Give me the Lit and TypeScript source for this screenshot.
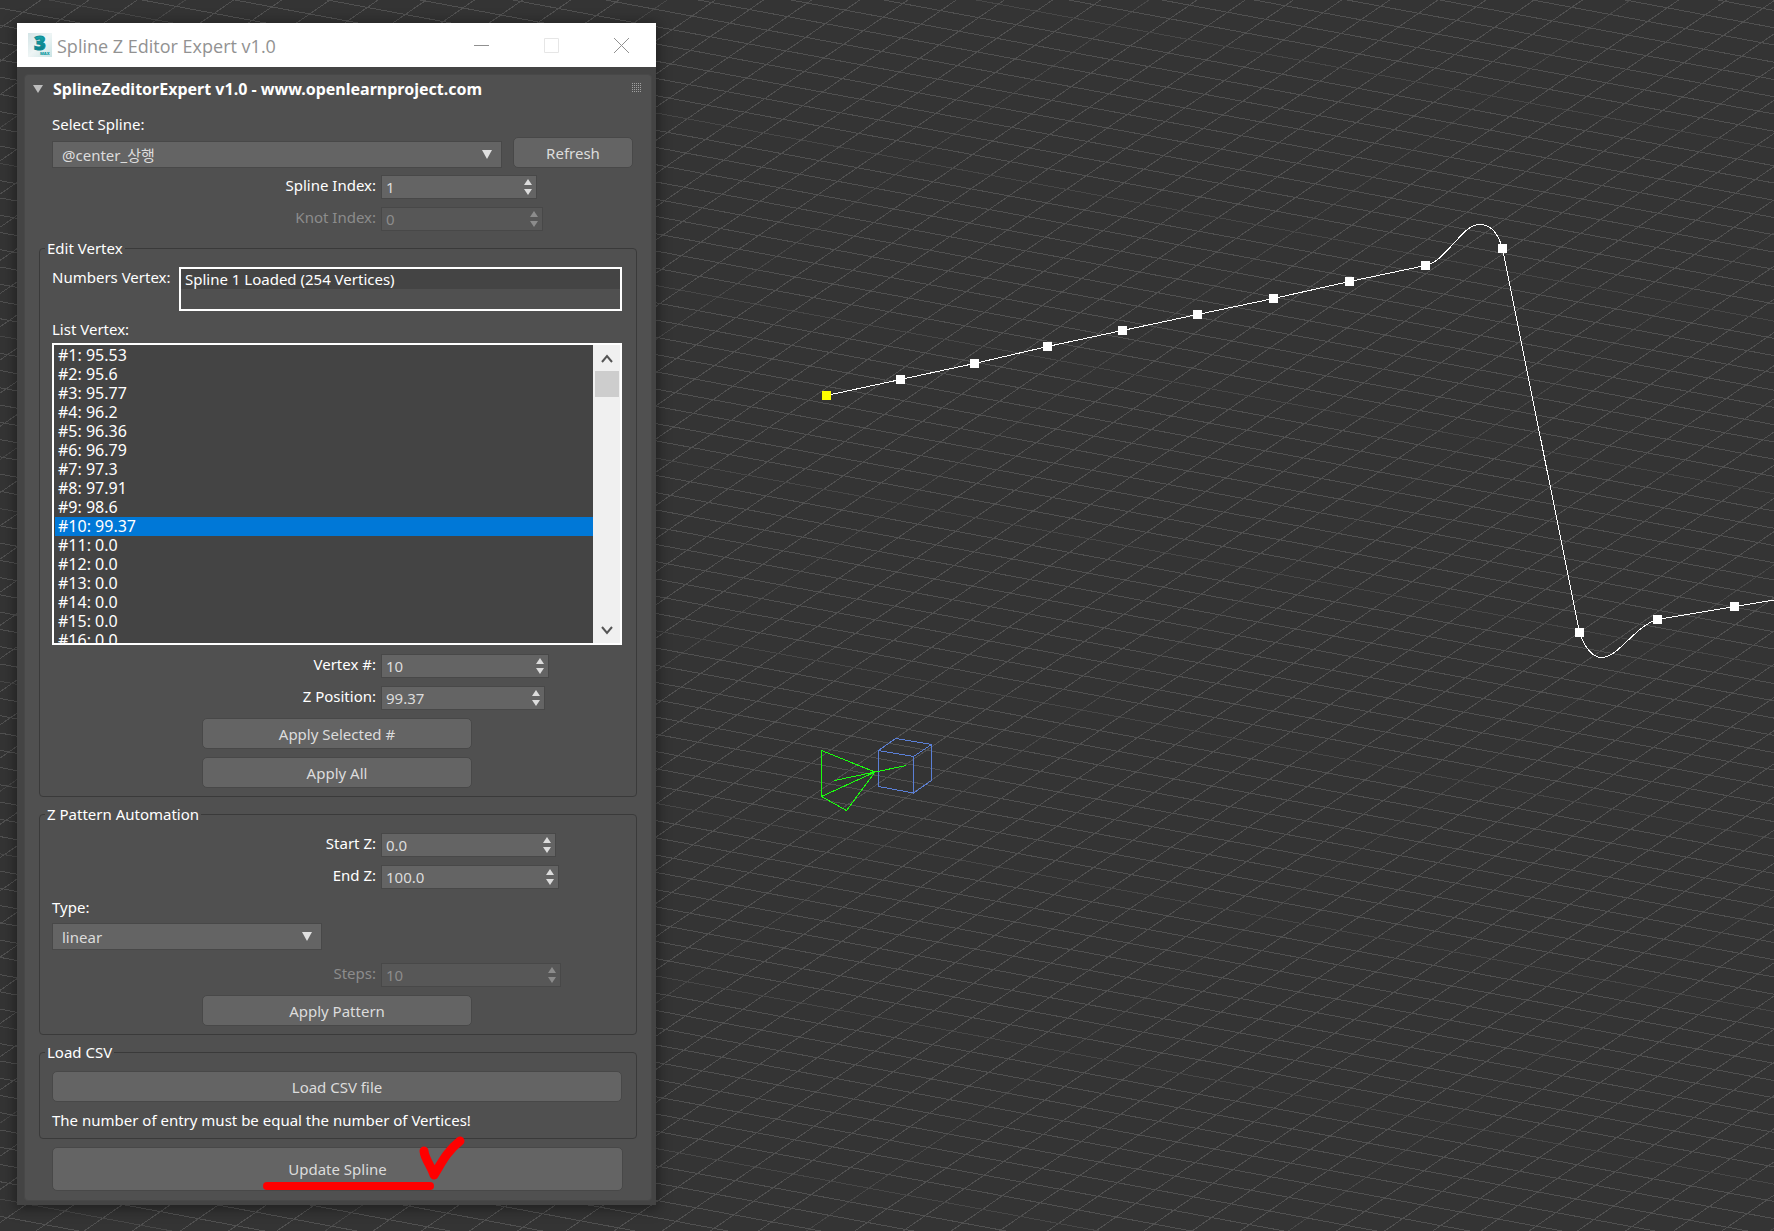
import { LitElement, html, svg, css } from "lit";
import { customElement, property, state } from "lit/decorators.js";
import { classMap } from "lit/directives/class-map.js";

const control = css`
  * {
    box-sizing: border-box;
  }
  button,
  input,
  select {
    margin: 0;
    font: inherit;
    color: inherit;
  }
`;

/** Home grid, spline, camera and box gizmos of the perspective viewport. */
@customElement("scene-viewport")
export class SceneViewport extends LitElement {
  static styles = css`
    :host {
      display: block;
      background: #343434;
      overflow: hidden;
    }
    .scene {
      display: block;
      width: 100%;
      height: 100%;
      fill: none;
      shape-rendering: crispEdges;
    }
    .grid {
      stroke: #505050;
    }
    .grid-major {
      stroke: #474747;
    }
    .spline {
      stroke: #fff;
    }
    .knot {
      fill: #fff;
    }
    .first {
      fill: #ff0;
    }
    .camera {
      stroke: #1aff0d;
    }
    .cube {
      stroke: #5a7fd6;
    }
  `;

  private readonly knots: [number, number][] = [
    [826, 395], [900, 379], [974, 363], [1047, 346], [1122, 330],
    [1197, 314], [1273, 298], [1349, 281], [1425, 265], [1502, 248],
    [1579, 632], [1657, 619], [1734, 606],
  ];

  private gridLines() {
    const span = 4000;
    const lines = [];
    for (let k = -30; k < 160; k++) {
      const c = 715.3 + 48.17 * k;
      const major = (((k - 9) % 10) + 10) % 10 === 0;
      lines.push(svg`<line class=${major ? "grid-major" : "grid"}
        x1=${c} y1="0" x2=${c - span / 0.68875} y2=${span} />`);
    }
    for (let k = -60; k < 230; k++) {
      const y = -9.2 + 17.26 * k;
      lines.push(svg`<line class=${k % 10 === 0 ? "grid-major" : "grid"}
        x1="0" y1=${y} x2=${span} y2=${y + span * 0.1862} />`);
    }
    return lines;
  }

  render() {
    return html`
      <svg class="scene" aria-hidden="true">
        ${this.gridLines()}
        <g class="cube">
          <path d="M878.5 750.5 895.5 738.5 931.5 744.5 913.5 756.5ZM878.5 750.5V786.5L913.5 793V756.5M913.5 793 931.5 780.5V744.5" />
        </g>
        <g class="camera">
          <path d="M875 772 821.5 750.5V796.5L846.5 810.5ZM875 772 821.5 796.5M834.5 780.5 875 772 906.5 765.5" />
        </g>
        <path
          class="spline"
          d="M826.5 395.5 900.5 379.5 974.5 363.5 1047.5 346.5 1122.5 330.5 1197.5 314.5 1273.5 298.5 1349.5 281.5 1425.5 265.5C1438 263 1446 251 1456 241C1464 232 1471 224.500 1480 224.500C1491 224.500 1498 233 1502.500 248.500L1579.500 632.500C1585 648 1592 657.500 1602 657.500C1618 657.500 1635 626 1657.500 619.500L1734.500 606.500 1774 600 2000 562"
        />
        ${this.knots.map(
          ([x, y], i) =>
            svg`<rect class=${i === 0 ? "first" : "knot"} x=${x - 4} y=${y - 4} width="9" height="9" />`
        )}
      </svg>
    `;
  }
}

/** Right-aligned label with a numeric field and up/down arrows. */
@customElement("spin-field")
export class SpinField extends LitElement {
  static styles = [
    control,
    css`
      :host {
        display: flex;
        align-items: flex-start;
        gap: 5px;
        color: #fff;
      }
      .label {
        flex: 0 0 324px;
        text-align: right;
        line-height: 20px;
      }
      .box {
        display: flex;
        align-items: center;
        height: 24px;
        padding-right: 4px;
        color: #dcdcdc;
        background: #646464;
        border: 1px solid #484848;
      }
      .value {
        flex: 1;
        min-width: 0;
        height: 20px;
        padding: 0 4px;
        border: 0;
        outline: 0;
        background: none;
      }
      .arrows {
        display: flex;
        flex-direction: column;
        gap: 2px;
      }
      .arrow {
        display: block;
        padding: 0;
        border: 0;
        background: none;
        height: 8px;
      }
      .glyph {
        display: block;
        fill: currentColor;
      }
      .off .label,
      .off .box {
        color: #8c8c8c;
      }
      .off .box {
        background: #575757;
      }
      .row {
        display: contents;
      }
    `,
  ];

  @property() label = "";
  @property() value = "";
  @property({ type: Number }) size = 160;
  @property({ type: Boolean }) disabled = false;

  render() {
    return html`
      <div class=${classMap({ row: true, off: this.disabled })}>
        <label class="label" for="value">${this.label}</label>
        <div class="box" style="width:${this.size}px">
          <input id="value" class="value" inputmode="decimal" .value=${this.value} ?disabled=${this.disabled} />
          <div class="arrows">
            <button class="arrow" aria-label="Increase" ?disabled=${this.disabled}>
              <svg class="glyph" width="8" height="8"><path d="M4 1 8 7H0Z" /></svg>
            </button>
            <button class="arrow" aria-label="Decrease" ?disabled=${this.disabled}>
              <svg class="glyph" width="8" height="8"><path d="M0 1H8L4 7Z" /></svg>
            </button>
          </div>
        </div>
      </div>
    `;
  }
}

@customElement("app-root")
export class AppRoot extends LitElement {
  static styles = [
    control,
    css`
      :host {
        display: block;
        position: relative;
        min-height: 100vh;
        padding: 23px 17px 26px;
        font: 15px/20px "Noto Sans", "Noto Sans CJK KR", sans-serif;
        color: #fff;
      }
      .viewport {
        position: absolute;
        inset: 0;
      }
      .window {
        position: relative;
        max-width: 639px;
        background: #444;
        box-shadow: 0 2px 12px 2px rgba(0, 0, 0, 0.4);
      }
      .titlebar {
        display: flex;
        align-items: center;
        height: 44px;
        padding-left: 11px;
        background: #fff;
        color: #929292;
      }
      .logo {
        overflow: visible;
      }
      .title {
        flex: 1;
        margin: 0;
        padding: 2px 0 0 5px;
        font: 18px/24px "Open Sans", sans-serif;
      }
      .caption {
        display: grid;
        place-items: center;
        width: 70px;
        height: 44px;
        padding: 0;
        border: 0;
        background: none;
        color: #909090;
      }
      .caption:disabled {
        color: #e6e6e6;
      }
      .line {
        fill: none;
        stroke: currentColor;
      }
      .body {
        padding: 7px 4px 4px 7px;
      }
      .panel {
        padding: 0 14px 9px;
        background: #505050;
        border: 1px solid #484848;
        border-radius: 4px;
      }
      .rollout {
        display: flex;
        align-items: center;
        gap: 10px;
        height: 28px;
        margin-left: -6px;
        margin-right: -5px;
      }
      .heading {
        flex: 1;
        margin: 0;
        font-size: 16px;
        line-height: 20px;
      }
      .stack {
        display: flex;
        flex-direction: column;
        gap: 8px;
        padding: 0 14px 0 13px;
      }
      .source {
        padding-top: 11px;
      }
      .picker {
        display: flex;
        align-items: flex-end;
        gap: 11px;
        margin: -5px -10px -1px 0;
      }
      .picker .combo {
        flex: 1;
      }
      .combo {
        position: relative;
      }
      .select {
        display: block;
        width: 100%;
        height: 27px;
        padding: 0 24px 0 9px;
        appearance: none;
        color: #dcdcdc;
        background: #646464;
        border: 1px solid #484848;
        border-radius: 0;
      }
      .drop {
        position: absolute;
        right: 10px;
        top: 9px;
        fill: #e0e0e0;
        pointer-events: none;
      }
      .button {
        height: 31px;
        padding: 0 8px;
        color: #dcdcdc;
        background: #646464;
        border: 1px solid #484848;
        border-radius: 5px;
      }
      .refresh {
        width: 120px;
      }
      .medium {
        width: 270px;
        align-self: center;
      }
      .large {
        height: 44px;
      }
      .group {
        min-width: 0;
        margin: 7px 0 0;
        padding: 0 0 8px;
        border: 1px solid #3a3a3a;
        border-radius: 4px;
      }
      .legend {
        margin-left: 5px;
        padding: 0 2px;
      }
      .group .stack {
        padding-top: 9px;
        padding-left: 12px;
      }
      .status {
        display: flex;
        align-items: flex-start;
      }
      .status-label {
        flex: 0 0 127px;
      }
      .status-box {
        flex: 1;
        height: 44px;
        border: 2px solid #fff;
        outline: 0;
      }
      .status-text {
        display: block;
        padding: 0 4px;
        height: 20px;
        line-height: 20px;
        background: #444;
      }
      .list {
        display: flex;
        height: 302px;
        margin: -4px 0 1px;
        border: 2px solid #fff;
        background: #444;
        font-size: 16px;
      }
      .items {
        flex: 1;
        margin: 0;
        padding: 1px 0 0 1px;
        list-style: none;
        overflow: hidden;
      }
      .item {
        height: 19px;
        padding-left: 3px;
        line-height: 19px;
      }
      .picked {
        background: #0078d7;
      }
      .scroll {
        display: flex;
        flex-direction: column;
        align-items: center;
        width: 27px;
        background: #f0f0f0;
        color: #505050;
      }
      .step {
        display: grid;
        place-items: center;
        width: 100%;
        height: 26px;
        padding: 0;
        border: 0;
        background: none;
        color: #555;
      }
      .track {
        flex: 1;
        width: 24px;
      }
      .thumb {
        height: 26px;
        background: #cdcdcd;
      }
      .chevron {
        fill: none;
        stroke: currentColor;
        stroke-width: 2;
      }
      .kind {
        width: 270px;
        margin: -2px 0 5px;
      }
      .footer {
        position: relative;
        padding-top: 8px;
      }
      .mark {
        position: absolute;
        left: 219px;
        top: -10px;
        fill: none;
        stroke: #f00;
        stroke-linecap: round;
        stroke-linejoin: round;
        pointer-events: none;
      }
    `,
  ];

  private readonly heights = [
    "95.53", "95.6", "95.77", "96.2", "96.36", "96.79", "97.3", "97.91",
    "98.6", "99.37", "0.0", "0.0", "0.0", "0.0", "0.0", "0.0",
  ];

  @state() private selected = 10;

  private arrow() {
    return html`<svg class="drop" width="10" height="9" aria-hidden="true"><path d="M0 0H10L5 9Z" /></svg>`;
  }

  private titlebar() {
    return html`
      <header class="titlebar">
        <svg class="logo" width="24" height="24" viewBox="0 0 24 24" aria-hidden="true">
          <defs>
            <linearGradient id="tile" x1="0" y1="0" x2="1" y2="1">
              <stop offset="0" stop-color="#d3e4e6" />
              <stop offset="0.500" stop-color="#eef5f5" />
              <stop offset="1" stop-color="#c9e3e4" />
            </linearGradient>
            <linearGradient id="digit" x1="0" y1="0" x2="0" y2="1">
              <stop offset="0" stop-color="#16b5b8" />
              <stop offset="1" stop-color="#0b6f7d" />
            </linearGradient>
          </defs>
          <rect width="24" height="24" fill="url(#tile)" />
          <text x="6" y="17" font-family="Open Sans, sans-serif" font-weight="800" font-size="20" fill="url(#digit)" stroke="#0e8a92">3</text>
          <text x="12" y="22" font-family="Open Sans, sans-serif" font-weight="800" font-size="4" fill="#0a9aa0">MAX</text>
        </svg>
        <h1 class="title">Spline Z Editor Expert v1.0</h1>
        <button class="caption" aria-label="Minimize">
          <svg class="line" width="15" height="15"><path d="M0 7.500H15" /></svg>
        </button>
        <button class="caption" aria-label="Maximize" disabled>
          <svg class="line" width="15" height="15"><path d="M.5 .5H14.500V14.500H.5Z" /></svg>
        </button>
        <button class="caption" aria-label="Close">
          <svg class="line" width="15" height="15"><path d="M0 0 15 15M15 0 0 15" /></svg>
        </button>
      </header>
    `;
  }

  private source() {
    return html`
      <div class="stack source">
        <label for="spline">Select Spline:</label>
        <div class="picker">
          <div class="combo">
            <select id="spline" class="select"><option>@center_상행</option></select>
            ${this.arrow()}
          </div>
          <button class="button refresh">Refresh</button>
        </div>
        <spin-field label="Spline Index:" value="1" size="156"></spin-field>
        <spin-field label="Knot Index:" value="0" size="162" disabled></spin-field>
      </div>
    `;
  }

  private editVertex() {
    return html`
      <fieldset class="group">
        <legend class="legend">Edit Vertex</legend>
        <div class="stack">
          <div class="status">
            <span class="status-label" id="count-label">Numbers Vertex:</span>
            <output class="status-box" aria-labelledby="count-label">
              <span class="status-text">Spline 1 Loaded (254 Vertices)</span>
            </output>
          </div>
          <span id="list-label">List Vertex:</span>
          <div class="list">
            <ul class="items" role="listbox" aria-labelledby="list-label">
              ${this.heights.map(
                (z, i) => html`<li
                  role="option"
                  aria-selected=${i + 1 === this.selected}
                  class=${classMap({ item: true, picked: i + 1 === this.selected })}
                  @click=${() => (this.selected = i + 1)}
                >#${i + 1}: ${z}</li>`
              )}
            </ul>
            <div class="scroll">
              <button class="step" aria-label="Scroll up">
                <svg class="chevron" width="12" height="9"><path d="M1 8 6 2 11 8" /></svg>
              </button>
              <div class="track"><div class="thumb"></div></div>
              <button class="step" aria-label="Scroll down">
                <svg class="chevron" width="12" height="9"><path d="M1 1 6 7 11 1" /></svg>
              </button>
            </div>
          </div>
          <spin-field label="Vertex #:" value="10" size="168"></spin-field>
          <spin-field label="Z Position:" value="99.37" size="164"></spin-field>
          <button class="button medium">Apply Selected #</button>
          <button class="button medium">Apply All</button>
        </div>
      </fieldset>
    `;
  }

  private pattern() {
    return html`
      <fieldset class="group">
        <legend class="legend">Z Pattern Automation</legend>
        <div class="stack">
          <spin-field label="Start Z:" value="0.0" size="175"></spin-field>
          <spin-field label="End Z:" value="100.0" size="178"></spin-field>
          <label for="type">Type:</label>
          <div class="combo kind">
            <select id="type" class="select"><option>linear</option></select>
            ${this.arrow()}
          </div>
          <spin-field label="Steps:" value="10" size="180" disabled></spin-field>
          <button class="button medium">Apply Pattern</button>
        </div>
      </fieldset>
    `;
  }

  private grip() {
    const dots = [];
    for (let y = 0; y < 5; y++) {
      for (let x = 0; x < 5; x++) {
        dots.push(svg`<rect x=${x * 2} y=${y * 2} width="1" height="1" />`);
      }
    }
    return html`<svg width="10" height="12" fill="#a0a0a0" aria-hidden="true">${dots}</svg>`;
  }

  render() {
    return html`
      <scene-viewport class="viewport"></scene-viewport>
      <section class="window">
        ${this.titlebar()}
        <div class="body">
          <div class="panel">
            <div class="rollout">
              <svg width="10" height="8" fill="#bdbdbd" aria-hidden="true"><path d="M0 0H10L5 8Z" /></svg>
              <h2 class="heading">SplineZeditorExpert v1.0 - www.openlearnproject.com</h2>
              ${this.grip()}
            </div>
            ${this.source()} ${this.editVertex()} ${this.pattern()}
            <fieldset class="group">
              <legend class="legend">Load CSV</legend>
              <div class="stack">
                <button class="button">Load CSV file</button>
                <span>The number of entry must be equal the number of Vertices!</span>
              </div>
            </fieldset>
            <div class="stack footer">
              <button class="button large">Update Spline</button>
              <svg class="mark" width="220" height="62" aria-hidden="true">
                <path stroke-width="8" d="M9 57H172" />
                <path stroke-width="9" d="M166 22C167 31 173 36 176 46C183 35 188 23 202 12" />
              </svg>
            </div>
          </div>
        </div>
      </section>
    `;
  }
}
